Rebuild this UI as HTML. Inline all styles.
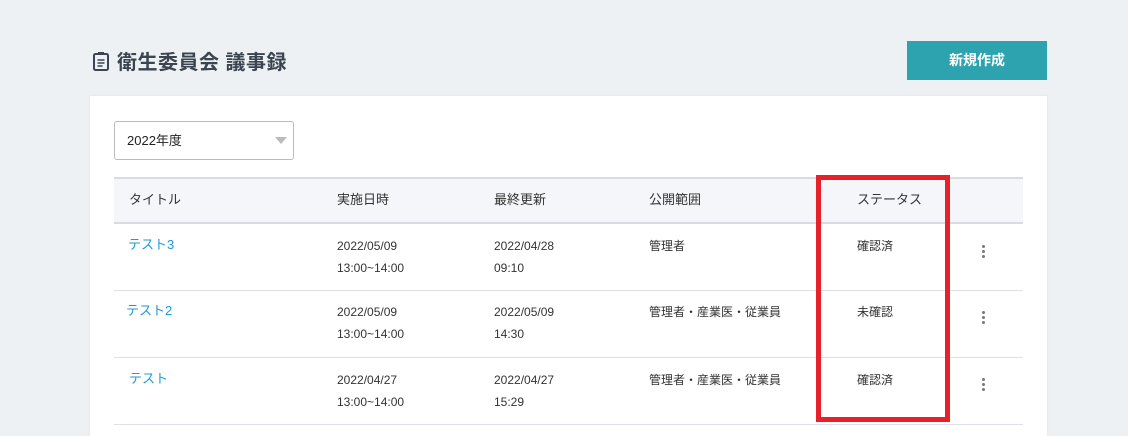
<!DOCTYPE html>
<html><head><meta charset="utf-8"><style>
*{margin:0;padding:0;box-sizing:border-box}
body{width:1128px;height:427px;overflow:hidden;background:#eef1f4;font-family:"Liberation Sans","Noto Sans CJK JP",sans-serif;position:relative;color:#333}
.abs{position:absolute}
h1{position:absolute;left:117px;top:46px;font-size:20px;font-weight:bold;color:#3b4450;letter-spacing:0.5px}
.btn{left:907px;top:41px;width:140px;height:39px;background:#2ea3b0;color:#fff;font-size:14px;font-weight:bold;text-align:center;line-height:39px}
.card{left:90px;top:96px;width:957px;height:340px;background:#fff;box-shadow:0 0 2px rgba(0,0,0,.08)}
.sel{left:114px;top:121px;width:180px;height:39px;border:1px solid #bbb;border-radius:3px;font-size:13px;line-height:37px;padding-left:12px;color:#222}
.sel:after{content:"";position:absolute;right:6px;top:15px;border-left:6px solid transparent;border-right:6px solid transparent;border-top:7px solid #bbb}
.thead{left:114px;top:177px;width:909px;height:47px;background:#f5f6f9;border-top:2px solid #d8dce2;border-bottom:2px solid #d8dce2}
.line{left:114px;width:909px;height:1px;background:#dde0e5}
.t{position:absolute;font-size:12px;color:#333;line-height:22px}
.h{font-size:13px;color:#333}
.lnk{color:#1c9ad6;font-size:13px}
.dots{position:absolute;width:3px}
.dots i{display:block;width:3px;height:3px;border-radius:50%;background:#777;margin-bottom:2px}
.red{left:816px;top:175px;width:134px;height:247px;border:5px solid #e8202a}
</style></head><body>
<svg class="abs" style="left:92px;top:51px" width="18" height="20" viewBox="0 0 18 20"><rect x="2" y="3" width="14" height="16" rx="1.5" fill="none" stroke="#3b4450" stroke-width="2"/><rect x="6" y="1" width="6" height="3" fill="#3b4450"/><path d="M5.5 9h7M5.5 12h7M5.5 15h5" stroke="#3b4450" stroke-width="1.6"/></svg>
<h1>衛生委員会 議事録</h1>
<div class="abs btn">新規作成</div>
<div class="abs card"></div>
<div class="abs sel">2022年度</div>
<div class="abs thead"></div>
<div class="t h" style="left:129px;top:189px">タイトル</div>
<div class="t h" style="left:337px;top:189px">実施日時</div>
<div class="t h" style="left:494px;top:189px">最終更新</div>
<div class="t h" style="left:649px;top:189px">公開範囲</div>
<div class="t h" style="left:857px;top:189px">ステータス</div>

<div class="t lnk" style="left:128px;top:234px">テスト3</div>
<div class="t" style="left:337px;top:235px">2022/05/09<br>13:00~14:00</div>
<div class="t" style="left:494px;top:235px">2022/04/28<br>09:10</div>
<div class="t" style="left:649px;top:235px">管理者</div>
<div class="t" style="left:857px;top:235px">確認済</div>
<div class="dots" style="left:982px;top:245px"><i></i><i></i><i></i></div>
<div class="abs line" style="top:290px"></div>

<div class="t lnk" style="left:126px;top:300px">テスト2</div>
<div class="t" style="left:337px;top:301px">2022/05/09<br>13:00~14:00</div>
<div class="t" style="left:494px;top:301px">2022/05/09<br>14:30</div>
<div class="t" style="left:649px;top:301px">管理者・産業医・従業員</div>
<div class="t" style="left:857px;top:301px">未確認</div>
<div class="dots" style="left:982px;top:311px"><i></i><i></i><i></i></div>
<div class="abs line" style="top:357px"></div>

<div class="t lnk" style="left:129px;top:368px">テスト</div>
<div class="t" style="left:337px;top:369px">2022/04/27<br>13:00~14:00</div>
<div class="t" style="left:494px;top:369px">2022/04/27<br>15:29</div>
<div class="t" style="left:649px;top:369px">管理者・産業医・従業員</div>
<div class="t" style="left:857px;top:369px">確認済</div>
<div class="dots" style="left:982px;top:378px"><i></i><i></i><i></i></div>
<div class="abs line" style="top:424px"></div>

<div class="abs red"></div>
</body></html>
